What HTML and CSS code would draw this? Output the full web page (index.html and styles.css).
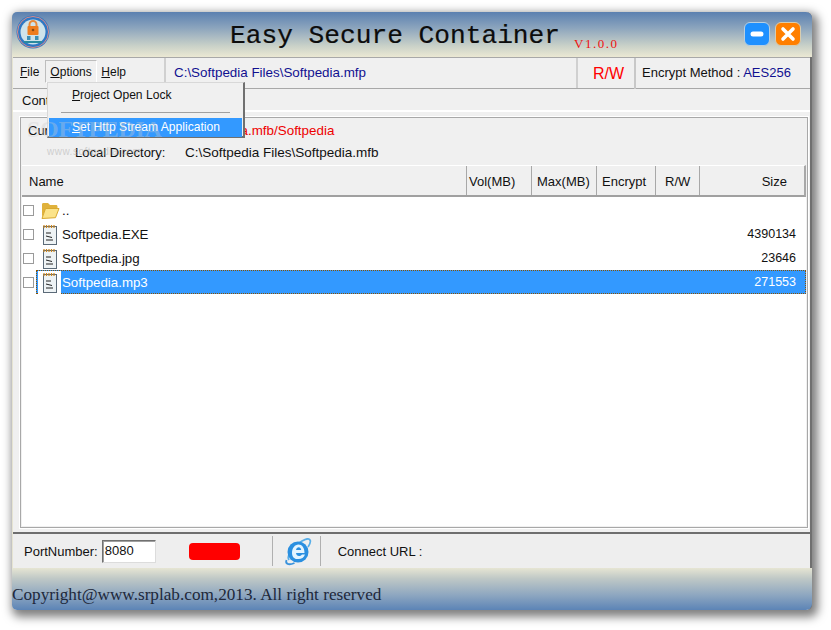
FILE: index.html
```html
<!DOCTYPE html>
<html lang="en">
<head>
<meta charset="utf-8">
<title>Easy Secure Container</title>
<link rel="stylesheet" href="styles.css">
</head>
<body>
<div class="window">
  <header class="titlebar">
    <svg class="logo" width="34" height="34" viewBox="0 0 34 34">
      <circle cx="17" cy="17" r="16.5" fill="#2f78c4"/>
      <circle cx="17" cy="17" r="15.5" fill="none" stroke="#d98a8a" stroke-width="1"/>
      <circle cx="17" cy="17" r="12.5" fill="#cfe3ea"/>
      <path d="M13.500 12V9.500a3.500 3.500 0 0 1 7 0V12" fill="none" stroke="#e88a3a" stroke-width="2"/>
      <rect x="11.500" y="11" width="11" height="9" rx="1" fill="#ee7d1e"/>
      <circle cx="17" cy="15" r="1.300" fill="#8a4a10"/>
      <rect x="11" y="21" width="3.500" height="4" fill="#3d8fb5"/>
      <rect x="19" y="21" width="3.500" height="4" fill="#3d8fb5"/>
      <rect x="8" y="26" width="18" height="2" fill="#2b8a9e"/>
    </svg>
    <h1 class="title">Easy Secure Container</h1>
    <span class="version">V1.0.0</span>
    <div class="winbtns">
      <button class="winbtn min" aria-label="Minimize"><svg width="14" height="6" viewBox="0 0 14 6"><rect x="0.5" y="0.5" width="13" height="5" rx="2.5" fill="#fff"/></svg></button>
      <button class="winbtn close" aria-label="Close"><svg width="16" height="16" viewBox="0 0 16 16"><path d="M3 3l10 10M13 3L3 13" stroke="#fff" stroke-width="3.6" stroke-linecap="round"/></svg></button>
    </div>
  </header>

  <div class="toolbar">
    <nav class="menubar">
      <span class="menu"><u>F</u>ile</span>
      <span class="menu open"><u>O</u>ptions</span>
      <span class="menu"><u>H</u>elp</span>
    </nav>
    <div class="path">C:\Softpedia Files\Softpedia.mfp</div>
    <div class="rw">R/W</div>
    <div class="method">Encrypt Method : <span class="aes">AES256</span></div>
  </div>

  <div class="tabs"><span class="tab">Container</span></div>

  <main class="panel">
    <div class="info">
      <div class="info-row cur"><span class="lab">Current:</span><span class="red">C:\Softpedia Files\Softpedia.mfb/Softpedia</span></div>
      <div class="info-row local"><span class="lab2">Local Directory:</span><span>C:\Softpedia Files\Softpedia.mfb</span></div>
    </div>
    <div class="thead">
      <div class="th name">Name</div>
      <div class="th vol">Vol(MB)</div>
      <div class="th max">Max(MB)</div>
      <div class="th enc">Encrypt</div>
      <div class="th rwc">R/W</div>
      <div class="th size">Size</div>
    </div>
    <div class="list">
      <div class="row">
        <span class="check"></span>
        <span class="ic"><svg width="20" height="20" viewBox="0 0 20 20"><path d="M2 17V4.500C2 3.500 2.600 3 3.500 3H8l2 2h6c1 0 1.500.6 1.500 1.500V8H6.500z" fill="#e0b23c"/><path d="M2 18.500 5.500 8.500H19l-3.500 9.200z" fill="#fbe38a" stroke="#d9a92f" stroke-width="1"/></svg></span>
        <span class="fname">..</span>
      </div>
      <div class="row">
        <span class="check"></span>
        <span class="ic"><svg class="fileic" width="16" height="21" viewBox="0 0 16 21"><rect x="1.500" y="2.500" width="13" height="18" fill="#eef3f5" stroke="#5b6a78"/><path d="M2 1v3M4.500 1v3M7 1v3M9.500 1v3M12 1v3" stroke="#c9851f" stroke-width="1.200"/><path d="M4 9h5M4 12l6 1.500M4 16h7" stroke="#222"/></svg></span>
        <span class="fname">Softpedia.EXE</span><span class="fsize">4390134</span>
      </div>
      <div class="row">
        <span class="check"></span>
        <span class="ic"><svg class="fileic" width="16" height="21" viewBox="0 0 16 21"><rect x="1.500" y="2.500" width="13" height="18" fill="#eef3f5" stroke="#5b6a78"/><path d="M2 1v3M4.500 1v3M7 1v3M9.500 1v3M12 1v3" stroke="#c9851f" stroke-width="1.200"/><path d="M4 9h5M4 12l6 1.500M4 16h7" stroke="#222"/></svg></span>
        <span class="fname">Softpedia.jpg</span><span class="fsize">23646</span>
      </div>
      <div class="row selected">
        <span class="check"></span>
        <div class="selbox">
          <span class="ic whitebox"><svg class="fileic" width="16" height="21" viewBox="0 0 16 21"><rect x="1.500" y="2.500" width="13" height="18" fill="#eef3f5" stroke="#5b6a78"/><path d="M2 1v3M4.500 1v3M7 1v3M9.500 1v3M12 1v3" stroke="#c9851f" stroke-width="1.200"/><path d="M4 9h5M4 12l6 1.500M4 16h7" stroke="#222"/></svg></span>
          <span class="fname">Softpedia.mp3</span><span class="fsize">271553</span>
        </div>
      </div>
    </div>
  </main>

  <div class="statusbar">
    <label class="port">PortNumber:</label>
    <span class="portinput">8080</span>
    <span class="led"></span>
    <span class="vsep first"></span>
    <svg class="ie" width="28" height="30" viewBox="0 0 28 30">
      <path d="M5 24C2 20 9 10 18 5c4-2 7-3 8-1 1 1.500 0 4-2 7" fill="none" stroke="#58aee8" stroke-width="1.800"/>
      <circle cx="14" cy="16" r="10.500" fill="#2a8fe0"/>
      <path d="M8 17c0-5 3-8.500 6.500-8.500 3.500 0 6 3 6 8.500H12c.2 2 1.500 3 3 3 1.500 0 2.500-.7 3-1.500h3c-1 3-3.500 4.500-6.500 4.500C10.500 23.500 8 21 8 17z" fill="#e3f4ff"/>
      <path d="M12 14c.3-1.800 1.500-2.800 2.700-2.800 1.300 0 2.200 1 2.500 2.800z" fill="#2a8fe0"/>
      <path d="M2.500 24c-1.500 4 2 5.500 8 3" fill="none" stroke="#3b93dc" stroke-width="1.800"/>
    </svg>
    <span class="vsep second"></span>
    <span class="url">Connect URL :</span>
  </div>

  <footer class="footer">Copyright@www.srplab.com,2013. All right reserved</footer>

  <div class="popup">
    <div class="pitem first"><u>P</u>roject Open Lock</div>
    <div class="psep"></div>
    <div class="pitem hot"><u>S</u>et Http Stream Application</div>
  </div>
  <div class="wm">SOFTPEDIA</div>
  <div class="wm2">www.softpedia.com</div>
</div>
</body>
</html>
```
FILE: styles.css
```css
* { box-sizing: border-box; }
html, body { margin: 0; padding: 0; background: #fff; }
body { width: 831px; height: 630px; overflow: hidden; font-family: "Liberation Sans", Arial, sans-serif; font-size: 13px; color: #111; }

.window {
  position: relative;
  margin: 12px 0 0 12px;
  width: 800px;
  height: 598px;
  display: flex;
  flex-direction: column;
  background: #f0f0f0;
  border-radius: 5px 6px 5px 5px;
  border-right: 2px solid #707070;
  border-left: 1px solid #e6e4d2;
  box-shadow: 3px 4px 10px 3px rgba(0,0,0,.5);
}

.titlebar {
  height: 45px;
  flex: none;
  display: flex;
  align-items: flex-start;
  background: linear-gradient(#5b80b0 0%, #8ba4bd 35%, #c9d1c8 75%, #ebe8d3 100%);
  border-radius: 5px 6px 0 0;
  margin-left: -1px;
  margin-right: -2px;
  padding-left: 4px;
}
.logo { flex: none; margin-top: 3px; }
.title { margin: 8px 0 0 180px; font: 400 26.200px/32px "Liberation Mono", monospace; color: #0c0c0c; white-space: nowrap; -webkit-text-stroke: .2px #0c0c0c; }
.version { margin: 25px 0 0 14px; font: 400 13px/14px "Liberation Serif", serif; color: #e11; letter-spacing: 1.500px; white-space: nowrap; }
.winbtns { margin-left: auto; margin-right: 11px; margin-top: 10px; display: flex; gap: 5px; }
.winbtn { width: 26px; height: 24px; padding: 0; border: 1px solid #b9cfe0; border-radius: 6px; display: flex; align-items: center; justify-content: center; }
.min { background: #1e90ff; }
.close { background: #ff7f00; border-color: #d8cdb0; }

.toolbar {
  height: 32px;
  flex: none;
  display: flex;
  align-items: stretch;
  border-top: 1px solid #a8a8a8;
  border-bottom: 1px solid #a8a8a8;
}
.menubar { width: 153px; flex: none; display: flex; padding: 2px 0 0 2px; border-right: 2px solid #d0d0d0; height: 30px; font-size: 12px; }
.menu { height: 23px; line-height: 25px; padding: 0 5px; white-space: nowrap; }
.menu.open { border: 1px solid; border-color: #bdbdbd #fff #fff #bdbdbd; padding: 0 3px 0 4px; line-height: 23px; width: 52px; margin-left: 1px; }
.menu:last-child { padding-left: 4px; }
.path { width: 412px; flex: none; padding-left: 8px; font-size: 13.400px; line-height: 30px; color: #101090; border-right: 2px solid #d0d0d0; height: 30px; white-space: nowrap; }
.rw { width: 58px; flex: none; text-align: center; color: #f00; font-size: 16px; line-height: 32px; border-right: 2px solid #c8c8c8; padding-left: 5px; height: 31px; }
.method { padding-left: 6px; line-height: 30px; white-space: nowrap; }
.aes { color: #101090; }

.tabs { height: 23px; flex: none; padding-left: 3px; border-bottom: 2px solid #fff; }
.tab { display: block; width: 80px; padding: 1px 0 0 6px; line-height: 22px; }

.panel {
  flex: 1 1 0;
  min-height: 0;
  margin: 5px 2px 4px 7px;
  display: flex;
  flex-direction: column;
  border: 1px solid #a8a8a8;
  padding: 1px;
  outline: 1px solid #fff;
}
.info { height: 46px; flex: none; }
.info-row { display: flex; white-space: nowrap; height: 23px; line-height: 23px; }
.local { line-height: 22px; }
.cur { padding-left: 6px; }
.lab { width: 54px; flex: none; }
.red { color: #e00; font-size: 13.400px; }
.lab2 { margin-left: 53px; width: 110px; }
.local span:last-child { font-size: 13.500px; }
.thead { height: 32px; flex: none; display: flex; background: #f0f0f0; border-top: 1px solid #fff; border-bottom: 2px solid #a0a0a0; border-right: 2px solid #a8a8a8; }
.th { display: flex; align-items: center; height: 29px; padding-top: 1px; border-right: 1px solid #a8a8a8; padding-left: 2px; white-space: nowrap; }
.th.name { width: 445px; padding-left: 7px; }
.th.vol { width: 65px; }
.th.max { width: 65px; padding-left: 5px; }
.th.enc { width: 59px; padding-left: 5px; }
.th.rwc { width: 44px; padding-left: 9px; }
.th.size { flex: 1; justify-content: flex-end; border-right: 0; padding-right: 17px; }

.list { flex: 1 1 0; background: #fff; padding-top: 1px; }
.row { height: 24px; display: flex; align-items: center; font-size: 13.300px; }
.check { width: 11px; height: 11px; flex: none; margin: 0 6px 0 1px; border: 1px solid #9a9a9a; background: #fff; }
.ic { width: 23px; height: 23px; flex: none; display: flex; align-items: center; justify-content: center; }
.ic svg { display: block; }
.fname { white-space: nowrap; padding-left: 1px; }
.fsize { margin-left: auto; font-size: 12.500px; }
.row > .ic { margin-left: -2px; }
.row > .fsize { padding-right: 10px; }
.selbox { flex: 1; height: 24px; margin-left: -4px; display: flex; align-items: center; background: #3399ff; color: #fff; border: 1px dotted #8a5200; padding-left: 1px; }
.whitebox { background: #fff; }
.selbox .fsize { padding-right: 9px; }

.statusbar {
  height: 36px;
  flex: none;
  display: flex;
  align-items: center;
  border-top: 2px solid #6e6e6e;
  background: #eee;
}
.port { margin-left: 11px; white-space: nowrap; }
.portinput { width: 54px; height: 23px; margin-left: 4px; border: 1px solid; border-color: #707070 #dcdcdc #dcdcdc #707070; background: #fff; padding-left: 2px; line-height: 19px; box-shadow: inset 1px 1px 0 #a0a0a0; }
.led { width: 51px; height: 17px; margin-left: 33px; border-radius: 4px; background: #f00; }
.vsep { width: 1px; height: 30px; background: #b0b0b0; }
.vsep.first { margin-left: 32px; }
.ie { margin: 0 8px 0 11px; }
.url { margin-left: 17px; white-space: nowrap; }

.footer {
  flex: none;
  height: 42px;
  margin: 0 -2px 0 -1px;
  padding-top: 16px;
  background: linear-gradient(#e6e5d3 0%, #bfc8c6 25%, #8da6c0 65%, #5c84b6 100%);
  border-radius: 0 0 6px 5px;
  font: 400 17.200px/22px "Liberation Serif", serif;
  color: #20283a;
  white-space: nowrap;
}

.popup {
  position: absolute;
  left: 34px;
  top: 70px;
  width: 198px;
  height: 56px;
  background: #f0f0f0;
  border: 1px solid #d8d8d8;
  border-right: 2px solid #707070;
  border-bottom: 2px solid #707070;
  padding: 1px 1px 0;
  font-size: 12.100px;
}
.pitem { padding-left: 23px; line-height: 21px; }
.pitem.first { padding-top: 1px; height: 21px; }
.psep { height: 1px; margin: 7px 12px 5px; background: #a0a0a0; }
.pitem.hot { background: #3399ff; color: #fff; height: 19px; line-height: 19px; }

.wm { position: absolute; left: 14px; top: 103px; font: 700 24px/28px "Liberation Serif", serif; letter-spacing: -.3px; color: rgba(205,205,205,.35); pointer-events: none; }
.wm2 { position: absolute; left: 34px; top: 134px; font-size: 10px; line-height: 12px; letter-spacing: .5px; color: rgba(170,170,170,.5); pointer-events: none; }
```
